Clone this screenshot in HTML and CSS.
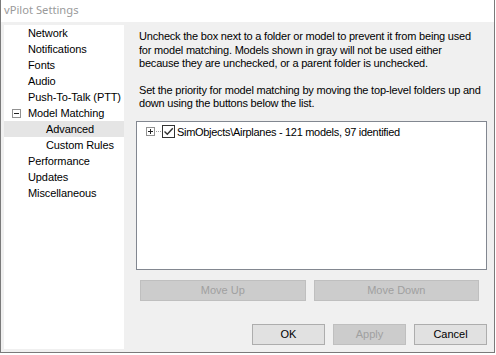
FILE: index.html
```html
<!DOCTYPE html>
<html lang="en">
<head>
    <meta charset="UTF-8">
    <title>vPilot Settings</title>
    <link rel="stylesheet" href="styles.css">
</head>
<body>

<div class="window">
    <div class="title-bar">vPilot Settings</div>
    <div class="window-body">
        <ul class="nav-tree">
            <li class="nav-item">Network</li>
            <li class="nav-item">Notifications</li>
            <li class="nav-item">Fonts</li>
            <li class="nav-item">Audio</li>
            <li class="nav-item">Push-To-Talk (PTT)</li>
            <li class="nav-item">
                <span class="expander minus"></span>Model Matching
            </li>
            <li class="nav-item child selected">Advanced</li>
            <li class="nav-item child">Custom Rules</li>
            <li class="nav-item">Performance</li>
            <li class="nav-item">Updates</li>
            <li class="nav-item">Miscellaneous</li>
        </ul>

        <div class="page">
            <p class="help">Uncheck the box next to a folder or model to prevent it from being used for model matching. Models shown in gray will not be used either because they are unchecked, or a parent folder is unchecked.</p>
            <p class="help second">Set the priority for model matching by moving the top-level folders up and down using the buttons below the list.</p>

            <div class="folder-list">
                <div class="folder-row">
                    <span class="expander plus"></span>
                    <span class="dots"></span>
                    <span class="checkbox">
                        <svg width="11" height="11" viewBox="0 0 11 11">
                            <path d="M1.5 5.5 L4.3 8.3 L9.8 2.2" fill="none" stroke="#333" stroke-width="1.4"/>
                        </svg>
                    </span>
                    <span class="folder-name">SimObjects\Airplanes - 121 models, 97 identified</span>
                </div>
            </div>

            <div class="move-buttons">
                <button class="btn disabled">Move Up</button>
                <button class="btn disabled">Move Down</button>
            </div>

            <div class="dialog-buttons">
                <button class="btn">OK</button>
                <button class="btn disabled">Apply</button>
                <button class="btn">Cancel</button>
            </div>
        </div>
    </div>
</div>

</body>
</html>
```

FILE: styles.css
```css
body {
    margin: 0;
    background: #fff;
    font-family: "Liberation Sans", Arial, sans-serif;
    font-size: 11px;
    color: #000;
}

.window {
    width: 493px;
    height: 352px;
    border: 1px solid #7a7a7a;
    border-top: none;
    display: flex;
    flex-direction: column;
    background: #f0f0f0;
}

.title-bar {
    height: 22px;
    line-height: 20px;
    padding-left: 3px;
    background: #fff;
    color: #9a9a9a;
    font-family: "Noto Sans", "Open Sans", sans-serif;
    font-size: 11.2px;
}

.window-body {
    flex: 1;
    display: flex;
    padding: 3px 0 3px 3px;
}

.nav-tree {
    list-style: none;
    margin: 0;
    padding: 0;
    width: 120px;
    background: #fff;
}

.nav-item {
    height: 16px;
    line-height: 16px;
    padding-left: 24px;
    position: relative;
    white-space: nowrap;
    letter-spacing: -0.1px;
}

.nav-item.child {
    padding-left: 42px;
}

.nav-item.selected {
    background: #e5e5e5;
}

.expander {
    display: inline-block;
    box-sizing: border-box;
    width: 9px;
    height: 9px;
    border: 1px solid #919191;
    background: #fff;
    position: relative;
}

.nav-item .expander {
    position: absolute;
    left: 8px;
    top: 4px;
}

.expander::before,
.expander::after {
    content: "";
    position: absolute;
    background: #222;
}

.expander::before {
    left: 1px;
    top: 3px;
    width: 5px;
    height: 1px;
}

.expander.plus::after {
    left: 3px;
    top: 1px;
    width: 1px;
    height: 5px;
}

.expander.minus::after {
    display: none;
}

.page {
    flex: 1;
    padding-left: 12px;
    padding-right: 7px;
    display: flex;
    flex-direction: column;
}

.help {
    margin: 5px 4px 0 3px;
    line-height: 13.5px;
    letter-spacing: -0.2px;
}

.help.second {
    margin-top: 13px;
}

.folder-list {
    margin-top: 10px;
    height: 147px;
    border: 1px solid #828790;
    background: #fff;
}

.folder-row {
    display: flex;
    align-items: center;
    height: 16px;
    margin-top: 2px;
    padding-left: 9px;
}

.dots {
    width: 5px;
    height: 0;
    border-top: 1px dotted #a0a0a0;
    margin: 0 1px;
}

.checkbox {
    box-sizing: border-box;
    width: 13px;
    height: 13px;
    border: 1px solid #333;
    display: flex;
    align-items: center;
    justify-content: center;
}

.folder-name {
    margin-left: 2px;
    white-space: nowrap;
    letter-spacing: -0.3px;
}

.btn {
    height: 21px;
    padding: 0;
    font-family: "Liberation Sans", Arial, sans-serif;
    font-size: 11px;
    color: #000;
    background: #e1e1e1;
    border: 1px solid #adadad;
}

.btn.disabled {
    color: #a0a0a0;
    background: #cccccc;
    border-color: #bfbfbf;
}

.move-buttons {
    display: flex;
    gap: 8px;
    margin-top: 10px;
    padding: 0 8px 0 4px;
}

.move-buttons .btn {
    flex: 1;
}

.dialog-buttons {
    display: flex;
    justify-content: flex-end;
    gap: 8px;
    margin-top: 23px;
}

.dialog-buttons .btn {
    width: 73px;
}
```
